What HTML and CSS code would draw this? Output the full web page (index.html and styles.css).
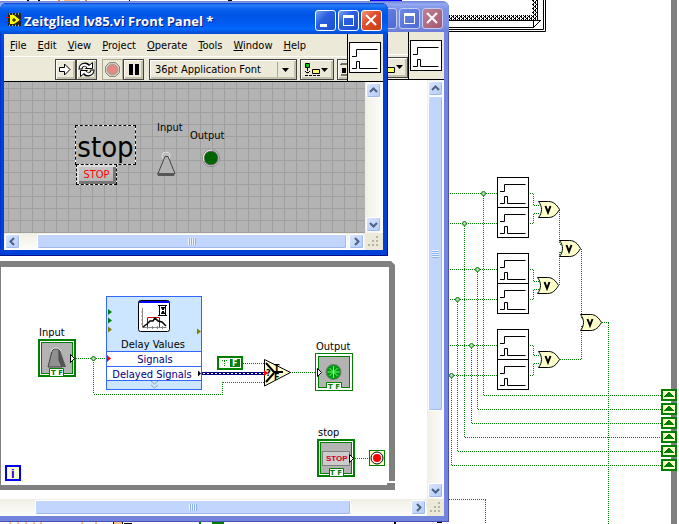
FILE: index.html
```html
<!DOCTYPE html>
<html lang="en">
<head>
<meta charset="utf-8">
<title>Zeitglied lv85.vi</title>
<link rel="stylesheet" href="styles.css">
</head>
<body>
<main class="desktop">
  <svg class="backdrop" aria-hidden="true">
    <defs>
      <pattern id="checker" width="4" height="4" patternUnits="userSpaceOnUse">
        <path d="M0 0h2v1h-2zM3 1h1v1h-1zM2 2h2v1h-2zM1 3h1v1h-1zM1 1h1v1h-1zM3 3h1v1h-1z"/>
      </pattern>
      <g id="pulse">
        <rect x=".5" y=".5" width="31" height="30" fill="#fff" stroke="#000"/>
        <path d="M3 14.500h4.500v-7h21M3 26.500h4.500v-7h3v7h18" fill="none" stroke="#000"/>
      </g>
      <g id="or">
        <path d="M.5 .5h10c5 0 8 3 11 8c-3 5-6 8-11 8h-10c4-5 4-11 0-16z" fill="#ffc" stroke="#000"/>
        <path d="M7.500 5l2.500 6.500l2.500-6.500" fill="none" stroke="#000" stroke-width="2"/>
      </g>
      <g id="joint">
        <circle r="2" fill="#b8dcb8" stroke="#008000"/>
      </g>
      <g id="shift">
        <rect x="1" y="1" width="14" height="10" fill="#ffc" stroke="#008000" stroke-width="2"/>
        <path d="M3 8v-1h1v-1h1v-1h1v-1h1v-1h2v1h1v1h1v1h1v1h1v1z" fill="#008000"/>
      </g>
    </defs>
    <rect x="671" width="6" height="100%" fill="#808080"/>
    <path d="M440 15h92V0h5v20H440z" fill="url(#checker)"/>
    <path d="M440 20.500h101M440 27.500h93.500M440 29.500h103.500V0M440 31.500h105.500V0M537.500 0v20M533.500 28v-7M533.500 27.500l7-7" fill="none" stroke="#000"/>
    <path d="M370 0h32v1h-32z" fill="#00f"/>
    <path d="M27 0h2v2h-2zM38 0v2h2V0zM129 0h1v3h-1zM228 0h4v2h-4z"/>
    <path d="M59 2V0M86 2V0M64 1.500h16" stroke="#ff8000" stroke-width="2"/>
    <path d="M10 522v2M18 522v2M26 522v2M34 522v2M41 522v2M82 522v2M96 522v2M114 523h8" stroke="#ff8000"/>
    <path d="M200 522v2M212 523h12" stroke="#008000" stroke-width="2"/>
    <path d="M113 522h1v2h-1zM122 522h1v2h-1zM124 523h8v1h-8zM394 522h2v2h-2zM437 522h5v1h-5z"/>

    <g class="wire">
      <path d="M450 193.500h47M450 223.500h47M450 269.500h47M450 299.500h47M450 345.500h47M450 375.500h47"/>
      <path d="M483.500 194v201M484 395.500h178M477.500 270v139M478 409.500h184M471.500 346v77M472 423.500h190M464.500 224v213M465 437.500h197M457.500 300v151M458 451.500h204M451.500 376v89M452 465.500h210"/>
      <path d="M530 193.500h4M533.500 194v11M534 205.500h6M530 223.500h4M533.500 214v10M534 213.500h6"/>
      <path d="M530 269.500h4M533.500 270v11M534 281.500h6M530 299.500h4M533.500 290v10M534 289.500h6"/>
      <path d="M530 345.500h4M533.500 346v9M534 355.500h6M530 375.500h4M533.500 364v12M534 363.500h6"/>
      <path d="M559.500 210v34M560 244.500h3M559.500 252v33M560 252.500h3M581.500 249v69M582 318.500h3M560 359.500h22M581.500 326v33M582 326.500h3M602 322.500h7M608.500 323v201M449 499.500h37M485.500 500v24"/>
    </g>
    <use href="#joint" x="483.500" y="193.500"/>
    <use href="#joint" x="464.500" y="223.500"/>
    <use href="#joint" x="477.500" y="269.500"/>
    <use href="#joint" x="457.500" y="299.500"/>
    <use href="#joint" x="471.500" y="345.500"/>
    <use href="#joint" x="451.500" y="375.500"/>
    <use href="#pulse" x="497" y="177"/><use href="#pulse" x="497" y="207"/>
    <use href="#pulse" x="497" y="253"/><use href="#pulse" x="497" y="283"/>
    <use href="#pulse" x="497" y="329"/><use href="#pulse" x="497" y="359"/>
    <use href="#or" x="538" y="201"/><use href="#or" x="559" y="240"/>
    <use href="#or" x="537" y="277"/><use href="#or" x="580" y="314"/>
    <use href="#or" x="538" y="351"/>
    <use href="#shift" x="661" y="389"/><use href="#shift" x="661" y="403"/>
    <use href="#shift" x="661" y="417"/><use href="#shift" x="661" y="431"/>
    <use href="#shift" x="661" y="445"/><use href="#shift" x="661" y="459"/>
  </svg>

  <section class="window window-back" aria-label="Block Diagram">
    <header class="titlebar">
      <span class="title"></span>
      <button class="cap" aria-label="Minimize"><svg viewBox="0 0 21 21"><path d="M5 14h7v3h-7z"/></svg></button>
      <button class="cap" aria-label="Maximize"><svg viewBox="0 0 21 21"><path d="M5 5h11v11h-11zM6 8v7h9v-7z" fill-rule="evenodd"/></svg></button>
      <button class="cap close" aria-label="Close"><svg viewBox="0 0 21 21"><path d="M5 5l10 10M15 5l-10 10" class="cross"/></svg></button>
    </header>
    <div class="bars">
      <div class="menubar"></div>
      <div class="toolbar end">
        <button class="tool wide" aria-label="Reorder"><svg width="31" height="19"><path d="M12.500 9.500h7v5h-7z" fill="#ffff66" stroke="#000"/><path d="M21 7h7l-3.500 4z"/></svg></button>
      </div>
      <div class="vi-icon"><svg width="32" height="31"><use href="#pulse"/></svg></div>
    </div>
    <div class="view">
      <svg class="diagram">
        <g transform="translate(56 -80)">
          <path d="M-20 261h411l4 4v216h-6V267H1v218h386v-2h8v7H-20z" fill="#808080"/>
          <g class="wire">
            <path d="M76 358.500h30M93.500 360v34M94 394.500h128M222.500 382v13M223 382.500h41M243 363.500h21M290 372.500h26M355 458.500h14"/>
          </g>
          <use href="#joint" x="93.500" y="358.500"/>

          <text x="39" y="336">Input</text>
          <rect x="39" y="340" width="36" height="36" fill="#fff" stroke="#008000" stroke-width="2"/>
          <rect x="41.500" y="342.500" width="31" height="31" fill="#b3b3b3" stroke="#008000"/>
          <path d="M57 350h3l6 17h-7z" fill="#555"/>
          <path d="M52 351l2-2h5v11l3 7h-14z" fill="#909090" stroke="#444"/>
          <path d="M51 352v-2l3-2h4l3 3" fill="none" stroke="#ddd"/>
          <path d="M70.500 354.500v8l4-4z" fill="#fff" stroke="#000"/>
          <path d="M49.500 376v-7.500h14v7.500" fill="#fff" stroke="#008000"/>
          <text class="tf" x="51" y="375">T F</text>

          <rect x="106.500" y="296.500" width="95" height="93" fill="#cce6ff" stroke="#3366ff"/>
          <path d="M106.500 351.500h95v29h-95zM106.500 366.500h95" fill="#fff" stroke="#3366ff"/>
          <path d="M107 381h94v8h-94z" fill="#cce6ff"/>
          <rect x="138.500" y="300.500" width="31" height="31" rx="2" fill="#fff" stroke="#000"/>
          <path d="M139 301h30v2h-30z" fill="#00f"/>
          <path d="M142.500 308v19.500h24M141 312h2M141 316h2M141 320h2M141 324h2M147.500 326v3M152.500 326v3M157.500 326v3M162.500 326v3" fill="none" stroke="#888"/>
          <path d="M147.500 327v-9.500h12v9.500" fill="none" stroke="#c00"/>
          <path d="M143 327l4-3 3-3h3l2-3 3 3 4 1 4 4" fill="none" stroke="#000" stroke-width="1.500"/>
          <path d="M158 305.500h9M158 315.500h9M159.500 306v9M165.500 306v9" fill="none" stroke="#000"/>
          <path d="M161 307h4v1l-1 1v1h-1v1h1v1l1 1v1h-4v-1l1-1v-1h1v-1h-1v-1l-1-1z"/>
          <path d="M108 309l4 3-4 3zM108 317.500l4 3-4 3z" fill="#008000"/>
          <path d="M108 326.500l4 3-4 3zM197 328.500l4 3-4 3z" fill="#808000"/>
          <path d="M107 355l4 3.500-4 3.500z" fill="#f00"/>
          <path d="M198 370.500l3 3-3 3z"/>
          <path d="M151 381l3.500 3 3.500-3M151 385l3.500 3 3.500-3" fill="none" stroke="#88a4bb"/>
          <text class="mid" x="153" y="348">Delay Values</text>
          <text class="mid navy" x="155" y="363">Signals</text>
          <text class="mid navy" x="152" y="378">Delayed Signals</text>

          <path d="M202 373.500h62" stroke="#000080" stroke-width="3"/>
          <path d="M203 373.500h61" stroke="#fff" stroke-dasharray="2 2"/>
          <rect x="218" y="357" width="24" height="12" fill="#fff" stroke="#008000" stroke-width="2"/>
          <path d="M230 359h10v8h-10z" fill="#008000"/>
          <path d="M222 360.500h5M224.500 361v5" class="wire"/>
          <text class="const" x="232" y="366">F</text>
          <path d="M264.500 359.500v26.500l26-13.500z" fill="#ffc" stroke="#000"/>
          <path d="M266 363l8 9h9M266 382l8-9" fill="none" stroke="#000" stroke-width="2"/>
          <path d="M264 370l4 3-4 3z" fill="#f00"/>
          <text class="mini" x="266" y="376">?</text>
          <text class="mini" x="274" y="371">T</text>
          <text class="mini" x="274" y="380">F</text>

          <text x="316" y="350">Output</text>
          <rect x="315.500" y="353.500" width="37" height="37" fill="#fff" stroke="#008000"/>
          <rect x="318.500" y="356.500" width="31" height="31" fill="#b3b3b3" stroke="#008000"/>
          <circle cx="333.500" cy="372" r="7.500" fill="#009a10" stroke="#777"/>
          <path d="M333.500 366v12M327.500 372h12M329.500 368l8 8M337.500 368l-8 8" stroke="#6f6"/>
          <path d="M317.500 368.500v8l4-4z" fill="#fff" stroke="#000"/>
          <path d="M326.500 389v-6.500h15v6.500z" fill="#fff"/>
          <path d="M319 387.500h7.500v-5h15v5h8" fill="none" stroke="#008000"/>
          <text class="tf" x="328" y="389">T F</text>

          <text x="318" y="436">stop</text>
          <rect x="318" y="440" width="36" height="36" fill="#fff" stroke="#008000" stroke-width="2"/>
          <rect x="320.500" y="442.500" width="31" height="31" fill="#b3b3b3" stroke="#008000"/>
          <rect x="322.500" y="451.500" width="27" height="14" fill="#ccc" stroke="#808080"/>
          <text class="halt" x="326" y="461">STOP</text>
          <path d="M349.500 454.500v8l4-4z" fill="#fff" stroke="#000"/>
          <path d="M329.500 476v-7.500h14v7.500" fill="#fff" stroke="#008000"/>
          <text class="tf" x="330" y="475">T F</text>

          <rect x="369.500" y="450.500" width="15" height="15" fill="#ffc" stroke="#008000"/>
          <circle cx="377" cy="458" r="6" fill="#fff" stroke="#000"/>
          <circle cx="377" cy="458" r="4" fill="#f00"/>
          <rect x="6" y="466" width="14" height="14" fill="#ffc" stroke="#00f" stroke-width="2"/>
          <text class="iter" x="11" y="478">i</text>
        </g>
      </svg>
      <div class="vscroll">
        <button class="arrow" aria-label="Scroll up"><svg viewBox="0 0 15 15"><path d="M4 9l3.500-3.500 3.500 3.500"/></svg></button>
        <span class="thumb back-v"></span>
        <button class="arrow low" aria-label="Scroll down"><svg viewBox="0 0 15 15"><path d="M4 6l3.500 3.500 3.500-3.500"/></svg></button>
      </div>
      <div class="hscroll">
        <button class="arrow" aria-label="Scroll left"><svg viewBox="0 0 15 15"><path d="M9 4l-3.500 3.500 3.500 3.500"/></svg></button>
        <span class="thumb back-h"></span>
        <button class="arrow low" aria-label="Scroll right"><svg viewBox="0 0 15 15"><path d="M6 4l3.500 3.500-3.500 3.500"/></svg></button>
      </div>
      <svg class="grip" width="17" height="17"><path d="M11 3h2v2h-2zM7 7h2v2h-2zM11 7h2v2h-2zM3 11h2v2h-2zM7 11h2v2h-2zM11 11h2v2h-2z"/></svg>
    </div>
  </section>

  <section class="window window-front" aria-label="Front Panel">
    <header class="titlebar">
      <svg class="app" width="16" height="16"><path d="M2 1h13v13h-13z" fill="#222"/><path d="M3 2h1M6 2h1M9 2h1M12 2h1M3 13.500h1M6 13.500h1M9 13.500h1M12 13.500h1" stroke="#bbb" stroke-width="1.500"/><path d="M4 3h4l6 5-6 4h-4z" fill="#ff0"/><path d="M6 8h4M8 6v4" stroke="#000"/><path d="M0 5.500h4" stroke="#f00"/><path d="M0 10.500h4M13 8.500h3" stroke="#03f"/></svg>
      <h1 class="title">Zeitglied lv85.vi Front Panel *</h1>
      <button class="cap" aria-label="Minimize"><svg viewBox="0 0 21 21"><path d="M5 14h7v3h-7z"/></svg></button>
      <button class="cap" aria-label="Maximize"><svg viewBox="0 0 21 21"><path d="M5 5h11v11h-11zM6 8v7h9v-7z" fill-rule="evenodd"/></svg></button>
      <button class="cap close" aria-label="Close"><svg viewBox="0 0 21 21"><path d="M5 5l10 10M15 5l-10 10" class="cross"/></svg></button>
    </header>
    <div class="bars">
      <nav class="menubar">
        <button><u>F</u>ile</button><button><u>E</u>dit</button><button><u>V</u>iew</button><button><u>P</u>roject</button><button><u>O</u>perate</button><button><u>T</u>ools</button><button><u>W</u>indow</button><button><u>H</u>elp</button>
      </nav>
      <div class="toolbar">
        <div class="pair">
          <button class="tool" aria-label="Run"><svg width="19" height="19"><path d="M3.500 7.500h5v-3.500l5.500 5.500-5.500 5.500v-3.500h-5z" fill="#fff" stroke="#000"/></svg></button>
          <button class="tool" aria-label="Run continuously"><svg width="19" height="19">
            <g id="loop-arrow"><path d="M3.500 9.500c0-5 5-6.500 8-3.500" fill="none" stroke="#000" stroke-width="4"/><path d="M8.500 8.500h7v-6z" fill="#fff" stroke="#000"/><path d="M3.500 8.500c.5-4 5-5 8-1.500" fill="none" stroke="#fff" stroke-width="2"/></g>
            <use href="#loop-arrow" transform="rotate(180 9.500 9.500)"/>
          </svg></button>
        </div>
        <div class="pair">
          <button class="tool off" aria-label="Abort"><svg width="19" height="19"><path d="M6.500 2.500h6l4 4v6l-4 4h-6l-4-4v-6z" fill="#ccc9bb" stroke="#8a877c"/><circle cx="9.500" cy="9.500" r="5" fill="#e88880" stroke="#a09c90"/></svg></button>
          <button class="tool" aria-label="Pause"><svg width="19" height="19"><path d="M5 4h4v11h-4zM11 4h4v11h-4z"/></svg></button>
        </div>
        <div class="combo">
          <select aria-label="Font"><option>36pt Application Font</option></select>
          <svg width="17" height="15"><path d="M.5 0v15" stroke="#aaa799"/><path d="M5 6h7l-3.500 4z"/></svg>
        </div>
        <button class="tool wide" aria-label="Align"><svg width="31" height="19"><path d="M4.500 3.500h4v4h-4z" fill="#0c0" stroke="#000"/><path d="M6.500 8v5M4 11l2.500 2.500 2.500-2.500M4 15.500h16" stroke="#000" fill="none" stroke-dasharray="3 1"/><path d="M11.500 9.500h7v4h-7z" fill="#ffff66" stroke="#000"/><path d="M20 8h7l-3.500 4z"/></svg></button>
        <button class="tool wide" aria-label="Distribute"><svg width="31" height="19"><path d="M3 5v-1h10M3 15h7" fill="none" stroke="#000"/><path d="M4 8h4v5h-4z"/><path d="M9 8h1v6h-1z"/></svg></button>
      </div>
      <div class="vi-icon"><svg width="32" height="31"><use href="#pulse"/></svg></div>
    </div>
    <div class="view">
      <div class="panel">
        <span class="item big-label">stop</span>
        <button class="item stop">STOP</button>
        <label class="item input-label" for="toggle">Input</label>
        <button class="item toggle" id="toggle"><svg width="20" height="26"><circle cx="10" cy="5" r="4" fill="#bbb" stroke="#ddd"/><path d="M9 5.500h3l7 17h-17z" fill="#b3b3b3" stroke="#444"/><path d="M1 22h18l-1 3h-16z" fill="#555"/></svg></button>
        <span class="item output-label">Output</span>
        <svg class="item led" width="20" height="20"><circle cx="10" cy="10" r="8.500" fill="#ddd" stroke="#888"/><circle cx="10" cy="10" r="7" fill="#006400" stroke="#666"/><path d="M3 13a8 8 0 0 1 8-11" fill="none" stroke="#eee"/></svg>
      </div>
      <div class="vscroll">
        <button class="arrow" aria-label="Scroll up"><svg viewBox="0 0 15 15"><path d="M4 9l3.500-3.500 3.500 3.500"/></svg></button>
        <button class="arrow low" aria-label="Scroll down"><svg viewBox="0 0 15 15"><path d="M4 6l3.500 3.500 3.500-3.500"/></svg></button>
      </div>
      <div class="hscroll">
        <button class="arrow" aria-label="Scroll left"><svg viewBox="0 0 15 15"><path d="M9 4l-3.500 3.500 3.500 3.500"/></svg></button>
        <span class="thumb front-h"></span>
        <button class="arrow low" aria-label="Scroll right"><svg viewBox="0 0 15 15"><path d="M6 4l3.500 3.500-3.500 3.500"/></svg></button>
      </div>
      <svg class="grip" width="17" height="17"><path d="M11 3h2v2h-2zM7 7h2v2h-2zM11 7h2v2h-2zM3 11h2v2h-2zM7 11h2v2h-2zM11 11h2v2h-2z"/></svg>
    </div>
  </section>
</main>
</body>
</html>
```
FILE: styles.css
```css
* { box-sizing: border-box; }

body {
  margin: 0;
  background: #fff;
  color: #000;
  font: 11px "DejaVu Sans Condensed", "Noto Sans", sans-serif;
}

button, select { font: inherit; color: inherit; }
svg { display: block; }

.desktop {
  position: relative;
  height: 100vh;
  overflow: hidden;
}

.backdrop {
  position: absolute;
  inset: 0;
  width: 100%;
  height: 100%;
}

.wire {
  fill: none;
  stroke: #008000;
  stroke-dasharray: 1 1;
  shape-rendering: crispEdges;
}

/* Windows */
.window {
  position: absolute;
  display: grid;
  grid-template-rows: 31px 48px 1fr;
  padding: 0 5px 6px 4px;
  border-radius: 7px 7px 0 0;
}

.window-front {
  left: 0;
  top: 3px;
  width: 388px;
  height: 253px;
  background: linear-gradient(#0a5be8, #0040d8 60px);
  box-shadow: inset -1px -1px #00138c, inset 1px 0 #0036d0, inset 0 1px #0831d9;
}

.window-back {
  left: -60px;
  top: 1px;
  width: 509px;
  height: 521px;
  background: #7384dc;
  box-shadow: inset -1px -1px #4a50b4;
}

.titlebar {
  display: flex;
  align-items: center;
  gap: 2px;
  margin: 0 -5px 0 -4px;
  padding: 4px 6px 0 6px;
  border-radius: 7px 7px 0 0;
}

.window-front .titlebar {
  background: linear-gradient(#0a3fc8, #2a80f8 2px, #0a62ee 6px, #0055e5 12px, #005af0 20px, #0468ff 26px, #0048cc);
}

.window-back .titlebar {
  background: linear-gradient(#6b7fd8, #94aaf0 3px, #7c92e6 8px, #7b90e5 24px, #6b7bd6);
}

.title {
  flex: 1;
  margin: 0;
  color: #fff;
  font: bold 13px "Open Sans", "Noto Sans", sans-serif;
  text-shadow: 1px 1px #0a1883;
  white-space: nowrap;
}

.app { margin-bottom: 2px; }

.cap {
  width: 21px;
  height: 21px;
  padding: 0;
  border: 1px solid #fff;
  border-radius: 3px;
  background: linear-gradient(135deg, #7ba2f4, #2a5fe0 40%, #1c4fd0);
}

.cap svg { width: 21px; height: 21px; margin: -1px; fill: #fff; }
.cap .cross { stroke: #fff; stroke-width: 2; }
.cap.close { background: linear-gradient(135deg, #f09a80, #e0502a 40%, #c83c14); }

.window-back .cap { border-color: #c3cdf4; background: linear-gradient(135deg, #7088e4, #4c68d4); }
.window-back .cap.close { background: linear-gradient(135deg, #bb8095, #a8586e); }

.bars {
  display: grid;
  grid-template: 23px 1fr / 1fr 36px;
  background: #ece9d8;
  border-bottom: 1px solid #000;
}

.menubar {
  display: flex;
  align-items: center;
  gap: 11px;
  padding-left: 6px;
  border-bottom: 1px solid #fff;
}

.menubar button { padding: 0; border: 0; background: none; }

.toolbar {
  display: flex;
  gap: 3px;
  padding: 2px 0 0 51px;
  overflow: hidden;
}

.toolbar.end { justify-content: flex-end; padding: 2px 0 0; }

.pair { display: flex; margin-right: 2px; }

.tool {
  flex: none;
  width: 21px;
  height: 21px;
  padding: 0;
  border: 1px solid #444;
  background: #ece9d8;
  box-shadow: inset 1px 1px #fff, inset -2px -2px #c4c0ae;
}

.tool.off { border-color: #aca899; box-shadow: none; }
.tool.wide { width: 34px; }

.combo {
  display: flex;
  flex: none;
  align-items: center;
  width: 148px;
  height: 21px;
  border: 1px solid #444;
  box-shadow: inset 1px 1px #fff, inset -2px -2px #c4c0ae;
}

.combo select {
  flex: 1;
  min-width: 0;
  padding: 0 0 0 5px;
  border: 0;
  background: none;
  appearance: none;
}

.combo svg { margin-right: 2px; }

.vi-icon {
  grid-area: 1 / 2 / 3 / 3;
  padding: 8px 0 0 1px;
  border-left: 1px solid #000;
}

/* Scrolled content */
.view {
  display: grid;
  grid-template: 1fr 17px / 1fr 17px;
  min-height: 0;
  background: #fff;
}

.window-front .view { grid-template-columns: 1fr 18px; }

.diagram { width: 100%; height: 100%; font-size: 11px; }
.diagram .mid { text-anchor: middle; }
.diagram .navy { fill: #000080; }
.diagram .tf { fill: #008000; font: bold 7px "DejaVu Sans", sans-serif; }
.diagram .const { fill: #fff; font: bold 8px "DejaVu Sans", sans-serif; }
.diagram .mini { font: bold 8px "DejaVu Sans", sans-serif; }
.diagram .halt { fill: #d00020; font: bold 8px "Liberation Sans", sans-serif; }
.diagram .iter { fill: #00f; font: bold 13px "Liberation Sans", sans-serif; }

.vscroll, .hscroll {
  display: flex;
  padding: 1px;
  background: linear-gradient(90deg, #f0efe6, #fdfdfa);
}

.vscroll { flex-direction: column; }
.hscroll { background: linear-gradient(#f0efe6, #fdfdfa); }

.arrow, .thumb {
  flex: none;
  border: 1px solid #fff;
  border-radius: 2px;
  background: linear-gradient(135deg, #d8e4fd, #b4cbfa);
  box-shadow: inset -1px -1px #a0b8f0;
}

.arrow { width: 15px; height: 15px; padding: 0; }
.arrow svg { width: 15px; height: 15px; margin: -1px; fill: none; stroke: #4d6185; stroke-width: 2; }
.low { margin-top: auto; }
.hscroll .low { margin: 0 0 0 auto; }

.thumb { display: grid; place-items: center; background: #c2d5fc; }
.thumb::after { content: ""; width: 8px; height: 7px; background: repeating-linear-gradient(90deg, #eef4fe 0 1px, #8cb0f8 1px 2px); }
.vscroll .thumb::after { width: 7px; height: 8px; background: repeating-linear-gradient(#eef4fe 0 1px, #8cb0f8 1px 2px); }
.back-v { height: 315px; }
.back-h { width: 316px; margin-left: 75px; }
.front-h { width: 310px; margin-left: 17px; }

.grip { background: #ece9d8; fill: #b8b4a2; width: 100%; }

/* Front panel objects */
.panel {
  position: relative;
  background:
    linear-gradient(90deg, #9f9f9f 1px, transparent 1px) 4px 6px / 12px 12px,
    linear-gradient(#9f9f9f 1px, transparent 1px) 4px 6px / 12px 12px,
    #b3b3b3;
}

.item { position: absolute; padding: 0; border: 0; background: none; }

.big-label {
  left: 71px;
  top: 43px;
  width: 61px;
  height: 40px;
  border: 1px dashed #000;
  background: linear-gradient(#b3b3b3, #b3b3b3) padding-box, #fff border-box;
  font: 29px/42px "DejaVu Sans Condensed", "Noto Sans", sans-serif;
  text-align: center;
}

.stop {
  left: 72px;
  top: 82px;
  width: 41px;
  height: 21px;
  border: 1px dashed #000;
  background: linear-gradient(#c8c8c8, #b4b4b4) padding-box, #fff border-box;
  box-shadow: inset 2px 2px #ddd, inset -3px -3px #777;
  color: #f00;
}

.input-label { left: 153px; top: 39px; }
.output-label { left: 186px; top: 47px; }
.toggle { left: 152px; top: 69px; }
.led { left: 197px; top: 66px; }
```
